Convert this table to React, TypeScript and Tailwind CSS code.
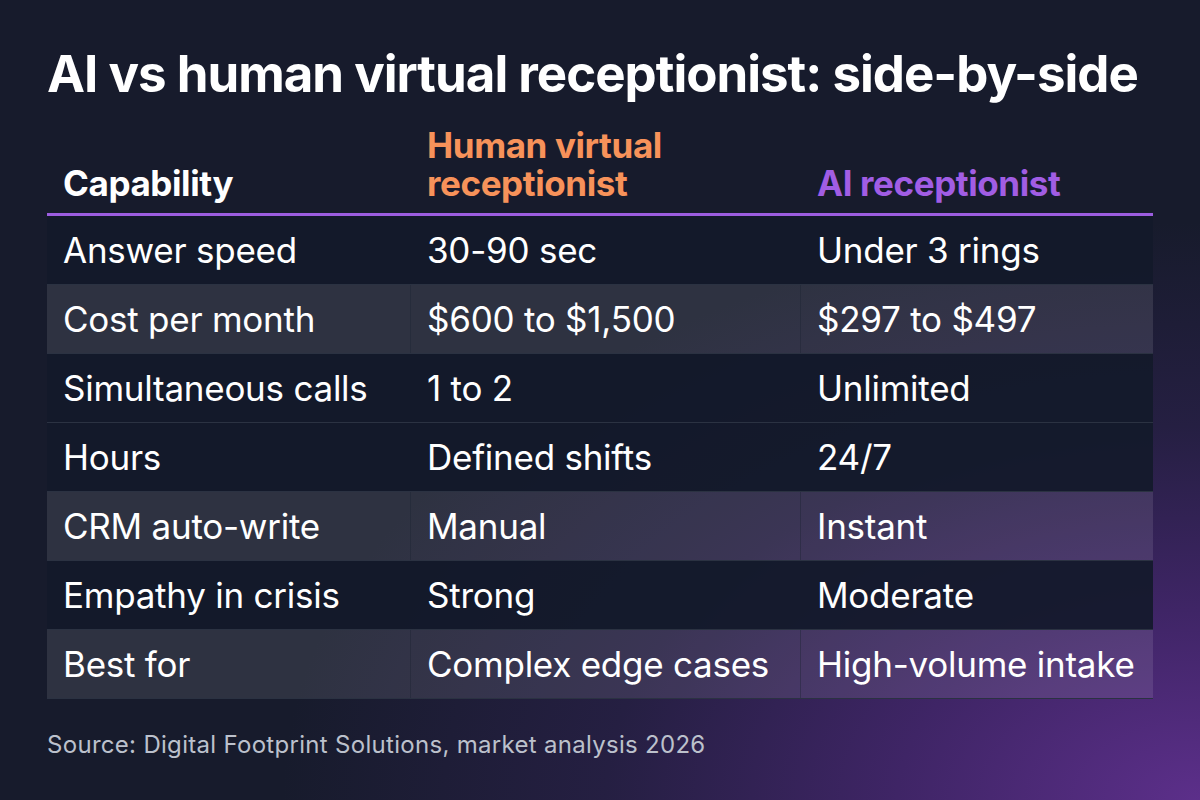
import React from "react";

const rows: { cap: string; human: string; ai: string; light: boolean }[] = [
  { cap: "Answer speed", human: "30-90 sec", ai: "Under 3 rings", light: false },
  { cap: "Cost per month", human: "$600 to $1,500", ai: "$297 to $497", light: true },
  { cap: "Simultaneous calls", human: "1 to 2", ai: "Unlimited", light: false },
  { cap: "Hours", human: "Defined shifts", ai: "24/7", light: false },
  { cap: "CRM auto-write", human: "Manual", ai: "Instant", light: true },
  { cap: "Empathy in crisis", human: "Strong", ai: "Moderate", light: false },
  { cap: "Best for", human: "Complex edge cases", ai: "High-volume intake", light: true },
];

export default function App() {
  return (
    <div
      className="w-[1200px] h-[800px] overflow-hidden bg-[#161b2b] bg-[radial-gradient(ellipse_90%_85%_at_100%_100%,#5c2f8a_0%,#3f2566_28%,#251f42_55%,#171b2c_85%)] text-white"
      style={{ fontFamily: "Inter, 'Noto Sans', sans-serif" }}
    >
      <div className="pl-[47px] pr-[47px] pt-[44px]">
        <h1 className="text-[51px] leading-[60px] font-bold tracking-[-1px] text-white whitespace-nowrap">
          AI vs human virtual receptionist: side-by-side
        </h1>
        <div className="mt-[22px] w-[1106px]">
          <div className="flex items-end border-b-[3px] border-[#9c5de0] pb-[11px] text-[35px] font-bold leading-[38px] tracking-[-0.4px]">
            <div className="w-[364px] pl-[16px]">Capability</div>
            <div className="w-[390px] pl-[16px] text-[#f7925a]">
              Human virtual
              <br />
              receptionist
            </div>
            <div className="flex-1 pl-[16px] text-[#a15de4]">AI receptionist</div>
          </div>
          {rows.map((r) => (
            <div
              key={r.cap}
              className={
                "flex h-[69px] items-center border-b border-[#2b3242] text-[35px] leading-none tracking-[-0.25px] whitespace-nowrap " +
                (r.light ? "bg-white/[0.1]" : "bg-[#131a2a]/90")
              }
            >
              <div
                className={
                  "flex h-full w-[364px] items-center pl-[16px] border-r " +
                  (r.light ? "border-[#1c2231]/40" : "border-transparent")
                }
              >
                {r.cap}
              </div>
              <div
                className={
                  "flex h-full w-[390px] items-center pl-[16px] border-r " +
                  (r.light ? "border-[#1c2231]/40" : "border-transparent")
                }
              >
                {r.human}
              </div>
              <div className="flex h-full flex-1 items-center pl-[16px]">{r.ai}</div>
            </div>
          ))}
        </div>
        <p className="mt-[31px] text-[24px] leading-[30px] text-[#bcc1cc] tracking-[0.3px]">
          Source: Digital Footprint Solutions, market analysis 2026
        </p>
      </div>
    </div>
  );
}
